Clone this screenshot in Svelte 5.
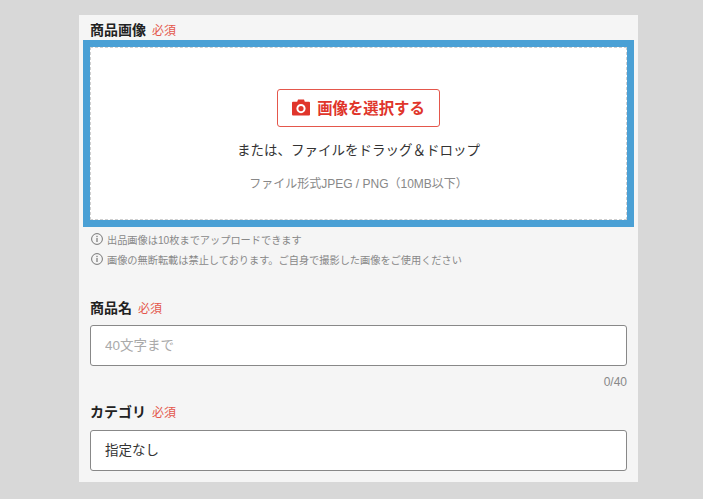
<script>
	const notes = [
		'出品画像は10枚までアップロードできます',
		'画像の無断転載は禁止しております。ご自身で撮影した画像をご使用ください'
	];
	let name = $state('');
</script>

<div class="page">
	<form class="panel">
		<div class="label first">
			<span class="title">商品画像</span>
			<span class="req">必須</span>
		</div>
		<div class="drop">
			<button type="button" class="pick">
				<svg width="18" height="17" viewBox="0 0 18 17" aria-hidden="true">
					<path
						fill="#e0352b"
						fill-rule="evenodd"
						d="M6 0.500h6l0.800 2.300h4.200a1 1 0 0 1 1 1v11.700a1 1 0 0 1-1 1H1a1 1 0 0 1-1-1V3.800a1 1 0 0 1 1-1h4.200zM9 5a4.600 4.600 0 1 0 0 9.200a4.600 4.600 0 0 0 0-9.200zM9 7a2.600 2.600 0 1 1 0 5.200a2.600 2.600 0 0 1 0-5.200z"
					/>
				</svg>
				<span>画像を選択する</span>
			</button>
			<p class="or">または、ファイルをドラッグ＆ドロップ</p>
			<p class="format">ファイル形式JPEG / PNG（10MB以下）</p>
		</div>

		<ul class="notes">
			{#each notes as note}
				<li>
					<svg width="12" height="12" viewBox="0 0 12 12" aria-hidden="true">
						<circle cx="6" cy="6" r="5.400" fill="none" stroke="#777" stroke-width="1" />
						<rect x="5.400" y="5" width="1.200" height="4" fill="#777" />
						<rect x="5.400" y="2.800" width="1.200" height="1.300" fill="#777" />
					</svg>
					<span>{note}</span>
				</li>
			{/each}
		</ul>

		<div class="label second">
			<span class="title">商品名</span>
			<span class="req">必須</span>
		</div>
		<input class="field" type="text" placeholder="40文字まで" bind:value={name} />
		<div class="count">{name.length}/40</div>

		<div class="label third">
			<span class="title">カテゴリ</span>
			<span class="req">必須</span>
		</div>
		<div class="field select">指定なし</div>
	</form>
</div>

<style>
	:global(body) {
		background: #d8d8d8;
	}

	.page {
		height: 499px;
		padding: 15px 65px 0 79px;
		box-sizing: border-box;
		font-family: 'Liberation Sans', 'Noto Sans CJK JP', sans-serif;
		overflow: hidden;
	}

	.panel {
		width: 559px;
		height: 467px;
		box-sizing: border-box;
		padding: 0 11px;
		background: #f5f5f5;
	}

	.label {
		display: flex;
		align-items: center;
		gap: 6px;
		height: 20px;
	}

	.label.first {
		padding-top: 5px;
	}

	.label.first .title,
	.label.first .req,
	.label.third .title,
	.label.third .req {
		position: relative;
		top: -1px;
	}

	.label.second {
		margin-top: 28px;
	}

	.label.third {
		margin-top: 10px;
	}

	.title {
		font-size: 14px;
		font-weight: 700;
		color: #222;
	}

	.req {
		font-size: 12px;
		color: #e4574c;
	}

	.drop {
		display: flex;
		flex-direction: column;
		align-items: center;
		height: 173px;
		margin-top: 7px;
		box-sizing: border-box;
		padding-top: 41px;
		background: #fff;
		border: 1px dashed #cfcfcf;
		outline: 7px solid #4aa0d5;
	}

	.pick {
		display: flex;
		align-items: center;
		justify-content: center;
		gap: 7px;
		width: 163px;
		height: 38px;
		padding: 0 0 2px;
		background: #fff;
		border: 1px solid #e4574c;
		border-radius: 3px;
		color: #e0352b;
		font: 700 15.400px 'Liberation Sans', 'Noto Sans CJK JP', sans-serif;
	}

	.or {
		margin: 14px 0 0;
		font-size: 13.500px;
		line-height: 20px;
		color: #333;
	}

	.format {
		margin: 13px 0 0;
		font-size: 12px;
		line-height: 20px;
		color: #888;
	}

	.notes {
		list-style: none;
		margin: 9px 0 0;
		padding: 0;
	}

	.notes li {
		display: flex;
		align-items: center;
		gap: 4px;
		height: 20px;
		padding-left: 1px;
		font-size: 10.200px;
		color: #888;
	}

	.field {
		display: block;
		width: 100%;
		height: 41px;
		box-sizing: border-box;
		margin-top: 8px;
		padding: 0 14px;
		background: #fff;
		border: 1px solid #888;
		border-radius: 3px;
		font: 13.500px/39px 'Liberation Sans', 'Noto Sans CJK JP', sans-serif;
		color: #333;
		outline: none;
	}

	.field::placeholder {
		color: #aaa;
	}

	.count {
		margin-top: 6px;
		height: 20px;
		text-align: right;
		font-size: 12px;
		line-height: 20px;
		color: #888;
	}
</style>
